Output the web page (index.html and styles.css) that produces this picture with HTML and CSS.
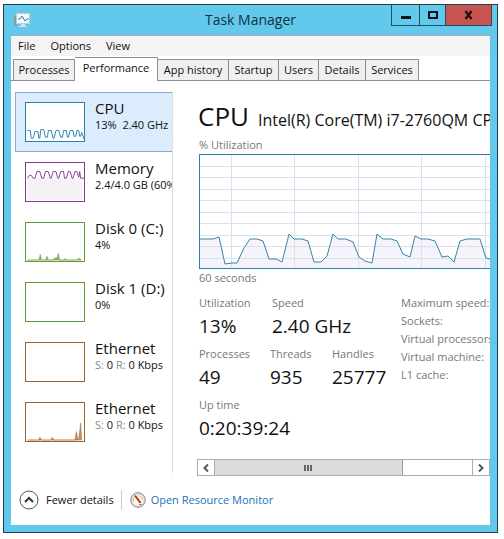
FILE: index.html
```html
<!DOCTYPE html>
<html lang="en">
<head>
<meta charset="utf-8">
<title>Task Manager</title>
<link rel="stylesheet" href="styles.css">
</head>
<body>
<div class="window">
  <header class="titlebar">
    <svg class="app-icon" width="18" height="16" viewBox="0 0 18 16">
      <rect x="1" y="4" width="3" height="10" fill="#8b9aa3"/>
      <rect x="3.500" y="1.500" width="13" height="10" fill="#f4fafc" stroke="#c3cdd2"/>
      <path d="M5 7h2l2-3 3 5 2-2h2" fill="none" stroke="#2b7fa8"/>
      <path d="M8 12h4v2h2v1H6v-1h2z" fill="#d8e0e3"/>
    </svg>
    <h1 class="title">Task Manager</h1>
    <div class="controls">
      <button class="control" aria-label="Minimize"><svg width="12" height="10"><path d="M1 6h10v3H1z" fill="#0b1418"/></svg></button>
      <button class="control maximize" aria-label="Maximize"><svg width="12" height="10"><path d="M2 2h8v6H2z" fill="none" stroke="#0b1418" stroke-width="2"/></svg></button>
      <button class="control close" aria-label="Close"><svg width="12" height="10"><path d="M2.500 1l6 8M8.500 1l-6 8" stroke="#201010" stroke-width="2.200"/></svg></button>
    </div>
  </header>
  <div class="client">
    <nav class="menu">
      <button>File</button><button>Options</button><button>View</button>
    </nav>
    <div class="tabs" role="tablist">
      <button class="tab" role="tab">Processes</button>
      <button class="tab active" role="tab" aria-selected="true">Performance</button>
      <button class="tab" role="tab">App history</button>
      <button class="tab" role="tab">Startup</button>
      <button class="tab" role="tab">Users</button>
      <button class="tab" role="tab">Details</button>
      <button class="tab" role="tab">Services</button>
    </div>
    <div class="panes">
      <aside class="side">
        <button class="item selected">
          <svg class="thumb cpu" viewBox="0 0 60 40"><path d="M1 29h3l1 8h2l2-7h3l1 7h1l1-9h3l2 8h2l1-7h3l2 8h1l2-8h3l2 7h2l1-7h3l1 7h1l2-7h3l1 6h2l1-6h2l1 6h1l1-4 3 8h1l2-2" /></svg>
          <span class="text"><span class="name">CPU</span><span class="sub">13%&nbsp; 2.40 GHz</span></span>
        </button>
        <button class="item">
          <svg class="thumb memory" viewBox="0 0 60 40"><path class="fill" d="M1 16h58v23H1z"/><path d="M1 16l2-3h2l2 3h2l2-7h3l2 7h2l2-7h3l2 7h1l2-7h3l2 7h1l2-7h3l1 7h2l2-7h2l2 7h1l2-7h2l2 6 1-6 1 7h6"/></svg>
          <span class="text"><span class="name">Memory</span><span class="sub">2.4/4.0 GB (60%)</span></span>
        </button>
        <button class="item">
          <svg class="thumb disk" viewBox="0 0 60 40"><path class="solid" d="M1 39h12l1.500-6 1.500 6h4l1.500-4 1.500 4h5l1-2 1 1 1-2 1 2 1.500-6 1.500 7h5l1-2 1 2h11l2-2 3 2z"/></svg>
          <span class="text"><span class="name">Disk 0 (C:)</span><span class="sub">4%</span></span>
        </button>
        <button class="item">
          <svg class="thumb disk" viewBox="0 0 60 40"></svg>
          <span class="text"><span class="name">Disk 1 (D:)</span><span class="sub">0%</span></span>
        </button>
        <button class="item">
          <svg class="thumb net" viewBox="0 0 60 40"></svg>
          <span class="text"><span class="name">Ethernet</span><span class="sub"><i>S:</i> 0 <i>R:</i> 0 Kbps</span></span>
        </button>
        <button class="item">
          <svg class="thumb net" viewBox="0 0 60 40"><path class="solid" d="M1 39h12l1-3 2 3h10l1-3 2 3h22l1.500-9 1.500 8h1l2-17 1 18z"/></svg>
          <span class="text"><span class="name">Ethernet</span><span class="sub"><i>S:</i> 0 <i>R:</i> 0 Kbps</span></span>
        </button>
      </aside>
      <main class="detail">
        <div class="heading"><h2>CPU</h2><span class="model">Intel(R) Core(TM) i7-2760QM CP</span></div>
        <div class="caption">% Utilization</div>
        <div class="graph">
          <svg width="290" height="113" viewBox="0 0 290 113" preserveAspectRatio="none">
            <path class="area" d="M0 84H13L19 82 25 109 32 108H37L44 93 50 84 57 84 63 86 69 104H76L82 107 89 79 94 84H102L108 86 114 107H121L127 101 133 79 138 84H146L153 87 159 102 165 106 172 108 177 79 183 84H191L197 86 203 99 210 102 215 81 221 84H228L235 86 242 102 248 101 254 107 260 86 267 84H280L286 103 290 104V113H0z"/>
            <path class="grid" d="M0 11.500H290M0 22.500H290M0 34.500H290M0 45.500H290M0 57.500H290M0 68.500H290M0 80.500H290M0 91.500H290M0 103.500H290M31.500 0V113M94.500 0V113M158.500 0V113M221.500 0V113M285.500 0V113"/>
            <path class="line" d="M0 84H13L19 82 25 109 32 108H37L44 93 50 84 57 84 63 86 69 104H76L82 107 89 79 94 84H102L108 86 114 107H121L127 101 133 79 138 84H146L153 87 159 102 165 106 172 108 177 79 183 84H191L197 86 203 99 210 102 215 81 221 84H228L235 86 242 102 248 101 254 107 260 86 267 84H280L286 103 290 104"/>
          </svg>
        </div>
        <div class="caption">60 seconds</div>
        <div class="stats">
          <div class="figures">
            <dl class="row"><div><dt>Utilization</dt><dd>13%</dd></div><div><dt>Speed</dt><dd>2.40 GHz</dd></div></dl>
            <dl class="row three"><div><dt>Processes</dt><dd>49</dd></div><div><dt>Threads</dt><dd>935</dd></div><div><dt>Handles</dt><dd>25777</dd></div></dl>
            <dl class="row"><div><dt>Up time</dt><dd>0:20:39:24</dd></div></dl>
          </div>
          <ul class="specs"><li>Maximum speed:</li><li>Sockets:</li><li>Virtual processors:</li><li>Virtual machine:</li><li>L1 cache:</li></ul>
        </div>
        <div class="scrollbar">
          <button class="arrow" aria-label="Scroll left"><svg width="8" height="8"><path d="M6 0.500L2.500 4 6 7.500" /></svg></button>
          <div class="track"><div class="grip"><svg width="9" height="8"><path d="M1 1v6M4 1v6M7 1v6"/></svg></div></div>
          <button class="arrow" aria-label="Scroll right"><svg width="8" height="8"><path d="M2 0.500L5.500 4 2 7.500" /></svg></button>
        </div>
      </main>
    </div>
    <footer class="footer">
      <button class="fewer"><svg width="20" height="20" viewBox="0 0 20 20"><circle cx="10" cy="10" r="9" fill="#fff" stroke="#555"/><path d="M6 12l4-4 4 4" fill="none" stroke="#333" stroke-width="2"/></svg>Fewer details</button>
      <a class="monitor" href="#"><svg width="16" height="16" viewBox="0 0 16 16"><circle cx="8" cy="8" r="7.300" fill="#ddd" stroke="#8c8c8c"/><circle cx="8" cy="8" r="5.500" fill="#fbf7ee"/><path d="M3.500 9.500a5 5 0 0 1 2-5M9 3.500a5 5 0 0 1 3.500 4" fill="none" stroke="#d8b27c"/><path d="M5 3.500l5.500 7.500" stroke="#c22c25" stroke-width="2"/><path d="M9 12.500h3" stroke="#888"/></svg>Open Resource Monitor</a>
    </footer>
  </div>
</div>
</body>
</html>
```
FILE: styles.css
```css
* { box-sizing: border-box; }
body {
  margin: 0;
  padding: 4px 6px 5px 3px;
  background: #fff;
  color: #111;
  font: 11px/18px "Open Sans", "Noto Sans", sans-serif;
}
button { margin: 0; padding: 0; border: 0; background: none; color: inherit; font: inherit; white-space: nowrap; }
h1, h2, dl, dd, ul { margin: 0; padding: 0; font-weight: 400; }
svg { display: block; flex: none; }

.window {
  display: flex;
  flex-direction: column;
  min-height: calc(100vh - 10px);
  padding: 0 7px 7px;
  border: 1px solid #23404c;
  background: #62c9ed;
}
.titlebar { display: grid; grid-template-columns: 1fr auto 1fr; height: 30px; }
.app-icon { margin: 7px 0 0 2px; }
.title { font-size: 14px; line-height: 30px; color: #12303c; }
.controls { display: flex; justify-content: flex-end; align-items: flex-start; margin-right: -2px; }
.control {
  display: flex;
  align-items: center;
  justify-content: center;
  width: 28px;
  height: 21px;
  border: 1px solid #23505f;
  border-top: 0;
  border-right: 0;
}
.maximize { width: 26px; }
.close { width: 47px; border-right: 1px solid #6b3434; background: #c75450; }

.client { display: flex; flex: 1; flex-direction: column; min-width: 0; border-top: 1px solid #a3a9b5; background: #fff; }
.menu { display: flex; gap: 15px; height: 20px; padding-left: 7px; background: #f5f4f5; }
.tabs {
  display: grid;
  grid-template-columns: 62px 83px 71px 50px 40px 47px 53px;
  align-items: end;
  height: 25px;
  padding-left: 2px;
  border-bottom: 1px solid #8d8d92;
}
.tab { height: 21px; border: 1px solid #8d8d92; border-left: 0; border-bottom: 0; background: #f0f0f1; }
.tab:first-child { border-left: 1px solid #8d8d92; }
.tab.active { height: 24px; margin-bottom: -1px; padding-bottom: 3px; background: #fff; }

.panes { display: flex; min-width: 0; padding-top: 11px; }
.side { flex: none; width: 162px; height: 381px; padding-left: 4px; overflow: hidden; border-right: 1px solid #dcdcdc; }
.item {
  display: flex;
  gap: 10px;
  width: 100%;
  height: 60px;
  padding: 9px 0 0 9px;
  overflow: hidden;
  border: 1px solid transparent;
  border-right: 0;
  text-align: left;
}
.selected { border-color: #84abdc; background: #dbecfc; }
.thumb { width: 60px; height: 40px; border: 1px solid; background: #fff; }
.thumb path { fill: none; stroke: currentColor; stroke-width: 1; }
.thumb .fill { fill: #f6f1f6; stroke: none; }
.thumb .solid { fill: currentColor; fill-opacity: .7; stroke-width: .5; }
.cpu { color: #2a82a8; }
.memory { color: #863a93; }
.disk { color: #5d9a38; }
.net { color: #a0622d; }
.text { display: flex; flex-direction: column; margin-top: -3px; }
.name { font-size: 15px; line-height: 18px; }
.sub { line-height: 16px; }
.sub i { font-style: normal; color: #888; }

.detail { flex: 1; min-width: 0; padding-left: 26px; overflow: hidden; }
.heading { display: flex; align-items: baseline; gap: 9px; height: 44px; margin-left: -1px; white-space: nowrap; }
.heading h2 { font-size: 26px; line-height: 48px; }
.model { font-size: 16px; }
.caption { color: #777; }
.graph { height: 115px; overflow: hidden; border: 1px solid #2a82ac; border-right: 0; }
.graph svg { width: 100%; }
.area { fill: #f6f4fb; }
.grid { fill: none; stroke: #d9e1ec; }
.line { fill: none; stroke: #3584a6; }
.stats { display: flex; height: 166px; padding-top: 7px; overflow: hidden; }
.figures { flex: none; width: 202px; }
.row { display: grid; grid-template-columns: 73px 1fr; height: 51px; white-space: nowrap; }
.three { grid-template-columns: 71px 62px 1fr; }
dt, .specs { color: #777; }
dd { font-size: 19px; line-height: 28px; }
.specs { list-style: none; white-space: nowrap; }
.scrollbar { display: flex; height: 17px; margin: 6px 0 0 -2px; border: 1px solid #adadad; }
.arrow { display: flex; align-items: center; justify-content: center; width: 16px; background: #fff; }
.arrow path { fill: none; stroke: #555; stroke-width: 2; }
.track { flex: 1; border: 1px solid #adadad; border-width: 0 1px; }
.grip { display: flex; align-items: center; justify-content: center; width: 73%; height: 100%; border-right: 1px solid #999; background: #dcdcdc; }
.grip path { stroke: #666; stroke-width: 2; }

.footer { display: flex; align-items: center; padding: 14px 8px 13px; }
.fewer { display: flex; align-items: center; gap: 7px; padding-right: 7px; border-right: 1px solid #ccc; }
.monitor { display: flex; align-items: center; gap: 5px; margin-left: 8px; color: #1d72b8; text-decoration: none; }
```
